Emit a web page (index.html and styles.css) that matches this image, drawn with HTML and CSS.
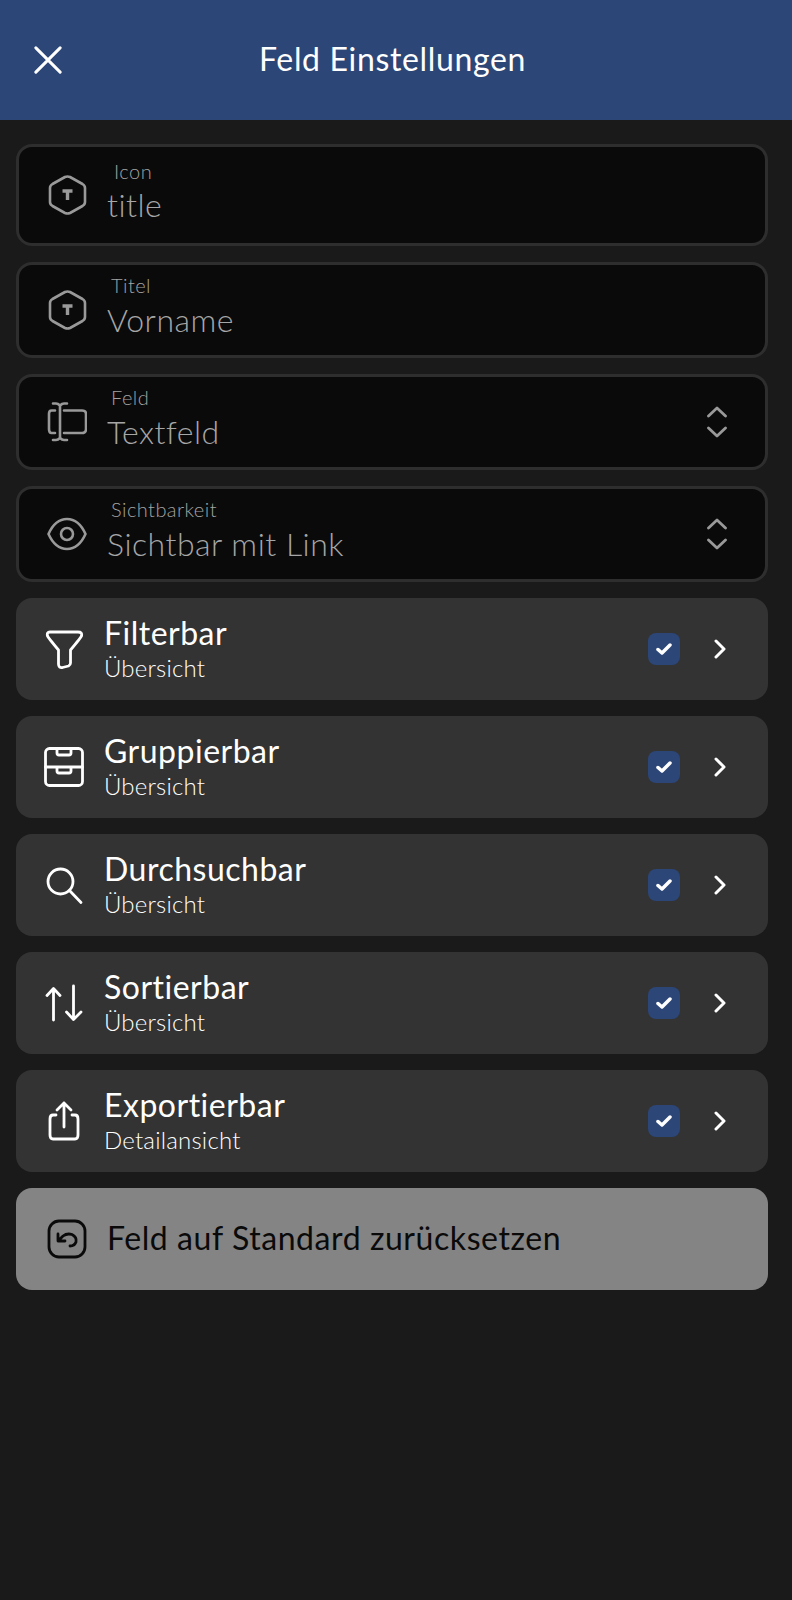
FILE: index.html
```html
<!DOCTYPE html>
<html lang="de">
<head>
<meta charset="utf-8">
<title>Feld Einstellungen</title>
<link rel="stylesheet" href="styles.css">
</head>
<body>
<header class="bar">
  <svg class="close" viewBox="0 0 30 30"><path d="M2 2 L28 28 M28 2 L2 28"/></svg>
  <h1 class="bar-title">Feld Einstellungen</h1>
</header>
<main class="content">
  <div class="field field-tall">
    <svg class="ficon" viewBox="0 0 40 40"><path d="M18 2 Q20.500 1 23 2 L35.500 9 Q38 10.500 38 13 V27 Q38 29.500 35.500 31 L23 38 Q20.500 39 18 38 L5.500 31 Q3 29.500 3 27 V13 Q3 10.500 5.500 9 Z"/><path class="t" d="M15.500 16 H25.500 M20.500 16 V25"/></svg>
    <div class="ftext ftext-icon"><span class="flabel flabel-icon">Icon</span><span class="fvalue">title</span></div>
  </div>
  <div class="field">
    <svg class="ficon" viewBox="0 0 40 40"><path d="M18 2 Q20.500 1 23 2 L35.500 9 Q38 10.500 38 13 V27 Q38 29.500 35.500 31 L23 38 Q20.500 39 18 38 L5.500 31 Q3 29.500 3 27 V13 Q3 10.500 5.500 9 Z"/><path class="t" d="M15.500 16 H25.500 M20.500 16 V25"/></svg>
    <div class="ftext"><span class="flabel">Titel</span><span class="fvalue">Vorname</span></div>
  </div>
  <div class="field">
    <svg class="ficon" viewBox="0 0 40 40"><path d="M8 8.500 H4.500 Q2 8.500 2 12 V27 Q2 31 4.500 31 H8 M17 8.500 H35 Q39 8.500 39 12 V27 Q39 31 35 31 H17"/><path d="M6 1.500 H9 Q11 1.500 13 3.500 Q15 1.500 17 1.500 H20 M13 3.500 V36 M6 38 H9 Q11 38 13 36 Q15 38 17 38 H20"/></svg>
    <div class="ftext"><span class="flabel">Feld</span><span class="fvalue">Textfeld</span></div>
    <svg class="updown" viewBox="0 0 20 32"><path d="M1.500 10 L10 2 L18.500 10 M1.500 22 L10 30 L18.500 22"/></svg>
  </div>
  <div class="field">
    <svg class="ficon" viewBox="0 0 40 40"><path d="M1.500 20 C6 10 13 5 20 5 C27 5 34 10 38.500 20 C34 30 27 35 20 35 C13 35 6 30 1.500 20 Z"/><circle cx="20" cy="20" r="6"/></svg>
    <div class="ftext"><span class="flabel">Sichtbarkeit</span><span class="fvalue">Sichtbar mit Link</span></div>
    <svg class="updown" viewBox="0 0 20 32"><path d="M1.500 10 L10 2 L18.500 10 M1.500 22 L10 30 L18.500 22"/></svg>
  </div>

  <div class="row">
    <svg class="ricon" viewBox="0 0 40 40"><path d="M6 3 H34 Q38.500 3 37.500 7 Q37 8.500 26.500 21 V34 Q26.500 36 24.500 37 L18.500 38.500 Q14.500 39 14.500 35 V21 Q4 8.500 3.500 7 Q2.500 3 6 3 Z"/></svg>
    <div class="rtext"><span class="rtitle">Filterbar</span><span class="rsub">Übersicht</span></div>
    <span class="check"><svg viewBox="0 0 16 14"><path d="M2 7.500 L6 11 L14 3"/></svg></span>
    <svg class="chev" viewBox="0 0 12 20"><path d="M2 2 L10 10 L2 18"/></svg>
  </div>
  <div class="row">
    <svg class="ricon" viewBox="0 0 40 40"><rect x="1.500" y="1.500" width="37" height="37" rx="4"/><path d="M1.500 20 H38.500 M13 2 V6 Q13 8 15 8 H25 Q27 8 27 6 V2 M13 20 V24 Q13 26 15 26 H25 Q27 26 27 24 V20"/></svg>
    <div class="rtext"><span class="rtitle">Gruppierbar</span><span class="rsub">Übersicht</span></div>
    <span class="check"><svg viewBox="0 0 16 14"><path d="M2 7.500 L6 11 L14 3"/></svg></span>
    <svg class="chev" viewBox="0 0 12 20"><path d="M2 2 L10 10 L2 18"/></svg>
  </div>
  <div class="row">
    <svg class="ricon" viewBox="0 0 40 40"><circle cx="16.500" cy="16.500" r="12.500"/><path d="M25.500 25.500 L37 37.500"/></svg>
    <div class="rtext"><span class="rtitle">Durchsuchbar</span><span class="rsub">Übersicht</span></div>
    <span class="check"><svg viewBox="0 0 16 14"><path d="M2 7.500 L6 11 L14 3"/></svg></span>
    <svg class="chev" viewBox="0 0 12 20"><path d="M2 2 L10 10 L2 18"/></svg>
  </div>
  <div class="row">
    <svg class="ricon" viewBox="0 0 40 40"><path d="M9.500 37 V6 M3 12.500 L9.500 5.500 L16 12.500 M29.500 3 V36 M22.500 29 L29.500 36.500 L37 29"/></svg>
    <div class="rtext"><span class="rtitle">Sortierbar</span><span class="rsub">Übersicht</span></div>
    <span class="check"><svg viewBox="0 0 16 14"><path d="M2 7.500 L6 11 L14 3"/></svg></span>
    <svg class="chev" viewBox="0 0 12 20"><path d="M2 2 L10 10 L2 18"/></svg>
  </div>
  <div class="row">
    <svg class="ricon" viewBox="0 0 40 40"><path d="M12 14 H9 Q6 14 6 18 V34 Q6 38 9 38 H31 Q34 38 34 34 V18 Q34 14 31 14 H28 M20 26 V2 M13 9 L20 2 L27 9"/></svg>
    <div class="rtext"><span class="rtitle">Exportierbar</span><span class="rsub">Detailansicht</span></div>
    <span class="check"><svg viewBox="0 0 16 14"><path d="M2 7.500 L6 11 L14 3"/></svg></span>
    <svg class="chev" viewBox="0 0 12 20"><path d="M2 2 L10 10 L2 18"/></svg>
  </div>

  <div class="reset">
    <svg class="reset-icon" viewBox="0 0 40 40"><rect x="2" y="2" width="36" height="36" rx="10"/><path d="M11 15 V22 H18 M11.500 21.500 L16 17 Q20 14 25 15.500 Q30 18 29 23 Q27.500 27 23 27"/></svg>
    <span class="reset-label">Feld auf Standard zurücksetzen</span>
  </div>
</main>
</body>
</html>
```

FILE: styles.css
```css
* { box-sizing: border-box; }
html, body { margin: 0; height: 100%; }
body {
  background: #1a1a1a;
  font-family: Lato, "Open Sans", sans-serif;
  color: #fff;
  min-height: 1600px;
}
svg { display: block; flex: none; fill: none; stroke-linecap: round; stroke-linejoin: round; }

.bar {
  height: 120px;
  background: #2c4678;
  display: flex;
  align-items: center;
  padding: 0 0 0 34px;
}
.close { width: 28px; height: 28px; stroke: #fff; stroke-width: 3.200; }
.bar-title {
  margin: -2px 0 0 197px;
  font-size: 32px;
  font-weight: 400;
  line-height: 40px;
  letter-spacing: 0.650px;
}

.content {
  padding: 24px 24px 24px 16px;
  display: flex;
  flex-direction: column;
  gap: 16px;
}

.field {
  height: 96px;
  background: #0a0a0a;
  border: 3px solid #2e2e2e;
  border-radius: 16px;
  display: flex;
  align-items: center;
  padding: 0 38px 0 28px;
}
.field-tall { height: 102px; }
.ficon { width: 40px; height: 40px; stroke: #999; stroke-width: 2.600; }
.ficon .t { stroke-width: 3.400; stroke-linecap: butt; }
.ftext { flex: 1; display: flex; flex-direction: column; margin-left: 20px; margin-top: -7px; }
.flabel { font-size: 20px; font-weight: 300; line-height: 22px; color: #a3a3a3; margin-left: 4px; letter-spacing: 0.450px; }
.flabel-icon { margin-left: 7px; }
.fvalue { font-size: 32px; font-weight: 300; line-height: 38px; color: #a6a6a6; letter-spacing: 0.500px; margin-top: 5px; }
.ftext-icon .fvalue { margin-top: 4px; }
.updown { width: 20px; height: 32px; stroke: #999; stroke-width: 2.800; }

.row {
  height: 102px;
  background: #333;
  border-radius: 16px;
  display: flex;
  align-items: center;
  padding: 0 42px 0 28px;
}
.ricon { width: 40px; height: 40px; stroke: #fff; stroke-width: 2.800; }
.rtext { flex: 1; display: flex; flex-direction: column; margin-left: 20px; margin-top: 1px; }
.rtitle { font-size: 32px; font-weight: 400; line-height: 34px; letter-spacing: 0.500px; }
.rsub { font-size: 24px; font-weight: 300; line-height: 30px; letter-spacing: 0.200px; margin-top: 3px; }

.check {
  width: 32px;
  height: 32px;
  border-radius: 8px;
  background: #2c4678;
  display: flex;
  align-items: center;
  justify-content: center;
  margin-right: 34px;
}
.check svg { width: 16px; height: 14px; stroke: #fff; stroke-width: 3.500; }
.chev { width: 12px; height: 20px; stroke: #fff; stroke-width: 3; }

.reset {
  height: 102px;
  background: #848484;
  border-radius: 16px;
  display: flex;
  align-items: center;
  padding: 0 0 0 31px;
  color: #0a0a0a;
}
.reset-icon { width: 40px; height: 40px; stroke: #0a0a0a; stroke-width: 2.800; }
.reset-label { margin: -4px 0 0 20px; font-size: 32px; font-weight: 400; letter-spacing: 0.570px; }
```
